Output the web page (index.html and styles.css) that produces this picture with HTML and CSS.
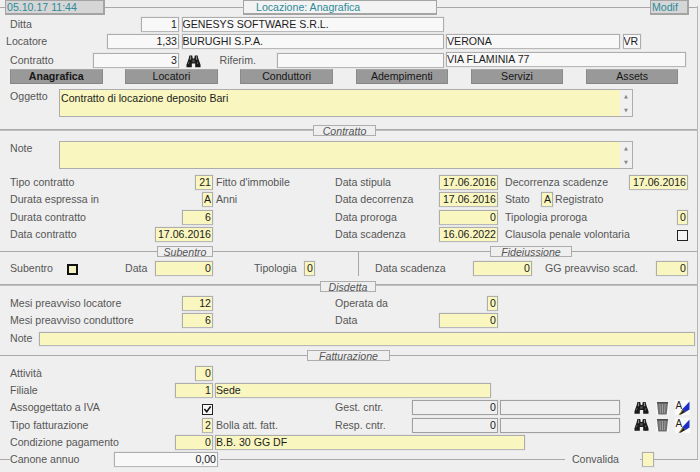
FILE: index.html
```html
<!DOCTYPE html>
<html lang="it">
<head>
<meta charset="utf-8">
<title>Locazione: Anagrafica</title>
<link rel="stylesheet" href="styles.css">
</head>
<body>
<svg class="defs" width="0" height="0" aria-hidden="true">
  <symbol id="binoc" viewBox="0 0 16 15">
    <path fill="#1a1a1a" d="M3.6 1h3l.6 3.4h1.6L9.400 1h3l.8 3.600 2.300 6.400v2.600H9.800V9.600H6.200v4H.5V11l2.300-6.400z"/>
    <path fill="#8a8a8a" d="M4.400 2h1v3.500h-1.400zM10.600 2h1l.4 3.500h-1.400zM2.200 10l1-2.500.5.200-.9 2.600zM11.800 10l.8-2.500.5.200-.7 2.600z"/>
    <rect x="6.800" y="5.500" width="2.400" height="2.800" fill="#555"/>
  </symbol>
  <symbol id="trash" viewBox="0 0 14 15">
    <rect width="14" height="15" fill="#f6f6f6"/>
    <path fill="#6e6e6e" d="M1 1h12l-1.500 13.500h-9z"/>
    <path stroke="#a4a4a4" stroke-width="1" fill="none" d="M4.200 3l.6 10M7 3v10M9.800 3l-.6 10"/>
    <rect x="1" y="1" width="12" height="1.500" fill="#4c4c4c"/>
  </symbol>
  <symbol id="pen" viewBox="0 0 15 15">
    <path fill="#1c2fc4" d="M14.500 1.500v8l-4 2.500-3-3z"/>
    <path fill="#222" d="M7.500 9l3 3-4.500 2.500-2 .5 1.500-2.500z"/>
    <path stroke="#c9a227" stroke-width="1" fill="none" d="M4 14.500l3.500-4"/>
  </symbol>
</svg>

<main class="page">
  <header class="topbar">
    <span class="rule rule-stub"></span>
    <div class="stamp stamp-date">05.10.17 11:44</div>
    <span class="rule rule-left"></span>
    <div class="title">Locazione: Anagrafica</div>
    <span class="rule"></span>
    <div class="stamp stamp-mode">Modif</div>
    <span class="rule rule-end"></span>
  </header>

  <section class="head">
    <div class="hrow">
      <div class="pair"><span class="lbl">Ditta</span><div class="f ro num w38">1</div></div>
      <div class="f ro">GENESYS SOFTWARE S.R.L.</div>
    </div>
    <div class="hrow">
      <div class="pair pair-out"><span class="lbl">Locatore</span><div class="f ro num w72">1,33</div></div>
      <div class="f ro">BURUGHI S.P.A.</div>
      <div class="f ro">VERONA</div>
      <div class="f ro">VR</div>
    </div>
    <div class="hrow">
      <div class="pair"><span class="lbl">Contratto</span><div class="f ro num w86">3</div></div>
      <div class="ref">
        <svg class="ic ic-main"><use href="#binoc"/></svg>
        <span class="lbl ref-lbl">Riferim.</span>
        <div class="f ro grow"></div>
      </div>
      <div class="f ro span3">VIA FLAMINIA 77</div>
    </div>
    <nav class="tabs">
      <div class="tab active">Anagrafica</div>
      <div class="tab">Locatori</div>
      <div class="tab">Conduttori</div>
      <div class="tab">Adempimenti</div>
      <div class="tab">Servizi</div>
      <div class="tab">Assets</div>
    </nav>
  </section>

  <div class="memo-row mt5">
    <span class="lbl memo-lbl">Oggetto</span>
    <div class="memo">Contratto di locazione deposito Bari<div class="scroll"><i>▲</i><i>▼</i></div></div>
  </div>

  <div class="divider d-contratto mt8">
    <span class="rule thick r-contratto"></span><div class="cap">Contratto</div><span class="rule thick"></span>
  </div>

  <div class="memo-row mt5">
    <span class="lbl memo-lbl">Note</span>
    <div class="memo"><div class="scroll"><i>▲</i><i>▼</i></div></div>
  </div>

  <section class="rows mt6">
    <div class="row">
      <div class="pair"><span class="lbl">Tipo contratto</span><div class="f y num w18">21</div></div>
      <span class="lbl desc">Fitto d'immobile</span>
      <div class="pair cc"><span class="lbl">Data stipula</span><div class="f y num w59">17.06.2016</div></div>
      <div class="pair"><span class="lbl">Decorrenza scadenze</span><div class="f y num w59">17.06.2016</div></div>
    </div>
    <div class="row">
      <div class="pair"><span class="lbl">Durata espressa in</span><div class="f y num w11">A</div></div>
      <span class="lbl desc">Anni</span>
      <div class="pair cc"><span class="lbl">Data decorrenza</span><div class="f y num w59">17.06.2016</div></div>
      <div class="stato"><span class="lbl stato-lbl">Stato</span><div class="f y num w12">A</div><span class="lbl">Registrato</span></div>
    </div>
    <div class="row">
      <div class="pair"><span class="lbl">Durata contratto</span><div class="f y num w31">6</div></div>
      <span class="desc"></span>
      <div class="pair cc"><span class="lbl">Data proroga</span><div class="f y num w59">0</div></div>
      <div class="pair"><span class="lbl">Tipologia proroga</span><div class="f y num w11">0</div></div>
    </div>
    <div class="row">
      <div class="pair"><span class="lbl">Data contratto</span><div class="f y num w58">17.06.2016</div></div>
      <span class="desc"></span>
      <div class="pair cc"><span class="lbl">Data scadenza</span><div class="f y num w59">16.06.2022</div></div>
      <div class="pair"><span class="lbl">Clausola penale volontaria</span><div class="check"></div></div>
    </div>
  </section>

  <div class="divider mt4">
    <span class="rule r-subentro"></span><div class="cap cap-sub">Subentro</div><span class="rule r-mid"></span><div class="cap cap-fid">Fideiussione</div><span class="rule"></span>
  </div>

  <section class="subrow mt4">
    <div class="pair"><span class="lbl sub-lbl">Subentro</span><div class="check check-bold"></div><span class="lbl sub-data">Data</span><div class="f y num w58">0</div></div>
    <div class="pair sub-tip"><span class="lbl">Tipologia</span><div class="f y num w11">0</div></div>
    <div class="pair sub-fid"><span class="lbl">Data scadenza</span><div class="f y num w59">0</div></div>
    <div class="pair"><span class="lbl">GG preavviso scad.</span><div class="f y num w32">0</div></div>
  </section>

  <div class="divider d-disdetta">
    <span class="rule thick r-disdetta"></span><div class="cap cap-dis">Disdetta</div><span class="rule thick"></span>
  </div>

  <section class="rows mt4">
    <div class="row">
      <div class="pair"><span class="lbl">Mesi preavviso locatore</span><div class="f y num w31">12</div></div>
      <span class="desc"></span>
      <div class="pair cc"><span class="lbl">Operata da</span><div class="f y num w11">0</div></div>
    </div>
    <div class="row">
      <div class="pair"><span class="lbl">Mesi preavviso conduttore</span><div class="f y num w31">6</div></div>
      <span class="desc"></span>
      <div class="pair cc"><span class="lbl">Data</span><div class="f y num w59">0</div></div>
    </div>
    <div class="note-row">
      <span class="lbl">Note</span><div class="f y grow"></div>
    </div>
  </section>

  <div class="divider d-fatt">
    <span class="rule r-fatt"></span><div class="cap cap-fat">Fatturazione</div><span class="rule"></span>
  </div>

  <section class="rows mt5">
    <div class="row">
      <div class="pair"><span class="lbl">Attività</span><div class="f y num w18">0</div></div>
    </div>
    <div class="row">
      <div class="pair"><span class="lbl">Filiale</span><div class="f y num w38">1</div></div>
      <div class="f y desc-f w276">Sede</div>
    </div>
    <div class="row">
      <div class="pair"><span class="lbl">Assoggettato a IVA</span><div class="check check-on"><svg viewBox="0 0 10 10"><path d="M1.500 4.500l2.700 3 4.300-6" fill="none" stroke="#111" stroke-width="1.800"/></svg></div></div>
      <span class="desc"></span>
      <div class="cntr"><span class="lbl">Gest. cntr.</span><div class="f gray num w86">0</div><div class="f gray w120"></div>
        <div class="tools"><svg class="ic ic-bin"><use href="#binoc"/></svg><svg class="ic ic-tr"><use href="#trash"/></svg><svg class="ic ic-pen" viewBox="0 0 15 15"><rect width="15" height="15" fill="#fafafa"/><text x="0.500" y="9" class="icon-a">A</text><use href="#pen"/></svg></div></div>
    </div>
    <div class="row">
      <div class="pair"><span class="lbl">Tipo fatturazione</span><div class="f y num w11">2</div></div>
      <span class="lbl desc">Bolla att. fatt.</span>
      <div class="cntr"><span class="lbl">Resp. cntr.</span><div class="f gray num w86">0</div><div class="f gray w120"></div>
        <div class="tools"><svg class="ic ic-bin"><use href="#binoc"/></svg><svg class="ic ic-tr"><use href="#trash"/></svg><svg class="ic ic-pen" viewBox="0 0 15 15"><rect width="15" height="15" fill="#fafafa"/><text x="0.500" y="9" class="icon-a">A</text><use href="#pen"/></svg></div></div>
    </div>
    <div class="row">
      <div class="pair"><span class="lbl">Condizione pagamento</span><div class="f y num w38">0</div></div>
      <div class="f y desc-f w310">B.B. 30 GG DF</div>
    </div>
  </section>

  <footer class="foot">
    <span class="rule r-foot"></span>
    <span class="lbl foot-lbl">Canone annuo</span>
    <div class="f ro num w104">0,00</div>
    <span class="rule foot-line"></span>
    <span class="lbl foot-conv">Convalida</span>
    <span class="rule r-conv"></span>
    <div class="f y w12"></div>
    <span class="rule r-last"></span>
  </footer>
</main>
</body>
</html>
```
FILE: styles.css
```css
* { box-sizing: border-box; }
html, body { margin: 0; padding: 0; background: #efefef; }
body {
  width: 700px;
  height: 472px;
  overflow: hidden;
  font: 10.6px/13px "Liberation Sans", Arial, sans-serif;
  color: #1c1c1c;
}
.defs { position: absolute; }
.icon-a { font: 10px "Liberation Sans", sans-serif; fill: #222; }

.page { position: relative; width: 698px; }
.page::after {
  content: "";
  position: absolute;
  top: 6px;
  right: 0;
  height: 453px;
  width: 1px;
  background: #b4b4b4;
}

.rule { flex: 1 1 0; height: 1px; background: #a8a8a8; }
.rule.thick { height: 2px; background: #c0c0c0; border-top: 1px solid #aaa; }
.rule-stub { flex: 0 0 5px; }
.rule-left { flex: 0 0 138px; }
.rule-end { flex: 0 0 9px; }

.topbar { display: flex; align-items: center; height: 15px; }
.stamp, .title {
  color: #2b8b99;
  height: 15px;
  line-height: 12px;
  border: 1px solid #a4a4a4;
}
.stamp { background: #d6d6d6; padding-left: 1px; border-bottom-width: 2px; border-right-width: 2px; }
.stamp-date { width: 100px; }
.stamp-mode { width: 39px; }
.title { width: 194px; background: #f3f3f3; padding-left: 12px; border-bottom-width: 2px; }

.f {
  height: 15px;
  border: 1px solid #adadad;
  border-bottom-color: #b8b8b8;
  line-height: 13px;
  padding: 0 1px 0 0;
  white-space: nowrap;
  overflow: hidden;
  box-shadow: 0 0 0 0.5px #e2e2e2;
  flex: none;
}
.ro { background: #f8f8f8; }
.y { background: #f9f7bf; }
.gray { background: #efefef; border-color: #a0a0a0; }
.num { text-align: right; }
.f.grow { flex: 1 1 0; }
.w11 { width: 11px; } .w12 { width: 12px; } .w18 { width: 18px; }
.w31 { width: 31px; } .w32 { width: 32px; } .w38 { width: 38px; }
.w58 { width: 58px; } .w59 { width: 59px; } .w72 { width: 72px; }
.w86 { width: 86px; } .w104 { width: 104px; } .w120 { width: 120px; }
.w276 { width: 276px; } .w310 { width: 310px; }

.lbl { color: #565656; white-space: nowrap; line-height: 15px; }
.pair { display: flex; justify-content: space-between; align-items: center; min-width: 0; }

.head { display: flex; flex-direction: column; gap: 2.33px; padding: 2px 0 0 10px; }
.hrow { display: grid; grid-template-columns: 169px 262px 174px 18px 43px; column-gap: 2.500px; height: 15px; }
.pair-out { margin-left: -4px; }
.ref { display: flex; align-items: center; }
.ic { display: block; flex: none; }
.ic-main { width: 15px; height: 15px; margin: 2px 0 0 4px; }
.ref-lbl { width: 57px; margin-left: 19px; }
.span3 { grid-column: span 3; }

.tabs { display: flex; gap: 22.700px; height: 15px; }
.tab {
  width: 92.500px;
  height: 15px;
  background: #999;
  border: 1px solid #8a8a8a;
  border-color: #a6a6a6 #8a8a8a #868686 #8a8a8a;
  text-align: center;
  line-height: 13px;
  color: #161616;
}
.active { font-weight: bold; }

.mt4 { margin-top: 4px; } .mt5 { margin-top: 5px; } .mt6 { margin-top: 6px; } .mt8 { margin-top: 8px; }

.memo-row { display: flex; padding-left: 10px; height: 28px; }
.memo-lbl { width: 49px; line-height: 14px; }
.memo {
  position: relative;
  width: 574px;
  height: 28px;
  background: #f9f7bf;
  border: 1px solid #adadad;
  padding: 2px 1px;
}
.scroll {
  position: absolute;
  top: 0;
  right: 0;
  bottom: 0;
  width: 12px;
  background: #f0f0f0;
  display: flex;
  flex-direction: column;
  justify-content: space-between;
  align-items: center;
  padding: 3px 0 2px;
}
.scroll i { font: normal 5px/7px "DejaVu Sans", sans-serif; color: #8a8a8a; }

.divider { display: flex; align-items: center; height: 11px; }
.cap {
  height: 11px;
  border: 1px solid #adadad;
  font-style: italic;
  color: #555;
  text-align: center;
  line-height: 10px;
  background: #efefef;
}
.r-contratto { flex: 0 0 313px; }
.d-contratto .cap { width: 63px; }
.r-subentro { flex: 0 0 157px; }
.cap-sub { width: 56px; }
.r-mid { flex: 0 0 277px; }
.cap-fid { width: 82px; }
.d-disdetta { margin-top: 5px; }
.d-disdetta .rule { margin-top: -3px; }
.r-disdetta { flex: 0 0 320px; }
.cap-dis { width: 56px; }
.d-fatt { margin-top: 4px; }
.r-fatt { flex: 0 0 307px; }
.cap-fat { width: 83px; }

.rows { display: flex; flex-direction: column; gap: 2.33px; padding-left: 10px; }
.row { display: grid; grid-template-columns: 203px 122px 170px 183px; height: 15px; }
.desc { padding-left: 3px; }
.desc-f { margin-left: 2px; grid-column: 2 / span 3; }
.cc { padding-right: 7px; }
.stato { display: flex; align-items: center; }
.stato-lbl { width: 36px; }
.stato .f { margin-right: 2px; }

.check {
  flex: none;
  width: 11px;
  height: 11px;
  border: 1px solid #222;
  background: #f4f4f4;
  margin-top: 3px;
}
.check-bold { border-width: 2px; border-color: #111; background: #f4f2c0; }
.check-on { background: #f6f6f6; border-width: 1.500px; }
.check-on svg { display: block; width: 100%; height: 100%; }

.subrow {
  display: grid;
  grid-template-columns: 203px 145px 187px 143px;
  padding-left: 10px;
  height: 15px;
}
.sub-lbl { width: 57px; }
.sub-data { margin-left: 47px; margin-right: auto; }
.sub-tip { margin-left: 41px; width: 61px; }
.sub-fid {
  height: 25px;
  margin-top: -10px;
  padding: 10px 13px 0 16px;
  border-left: 1px solid #a8a8a8;
}

.note-row { display: flex; align-items: center; height: 14px; margin-top: 1px; }
.note-row .lbl { width: 29px; }
.note-row .f { height: 14px; margin-right: 3px; }

.cntr { display: flex; align-items: center; grid-column: 3 / span 2; }
.cntr .lbl { width: 77px; flex: none; }
.cntr .f { margin-right: 2px; }
.tools { display: flex; align-items: center; margin-left: 12px; flex: none; }
.ic-bin { width: 15px; height: 14px; }
.ic-tr { width: 13px; height: 14px; margin-left: 7px; }
.ic-pen { width: 15px; height: 15px; margin-left: 6px; }

.foot { display: flex; align-items: center; height: 15px; margin-top: 2px; }
.r-foot { flex: 0 0 10px; }
.foot-lbl { width: 104px; }
.foot-line { margin-left: 2px; }
.foot-conv { margin: 0 21px 0 7px; }
.r-conv { flex: 0 0 2px; }
.r-last { flex: 0 0 44px; }
```
